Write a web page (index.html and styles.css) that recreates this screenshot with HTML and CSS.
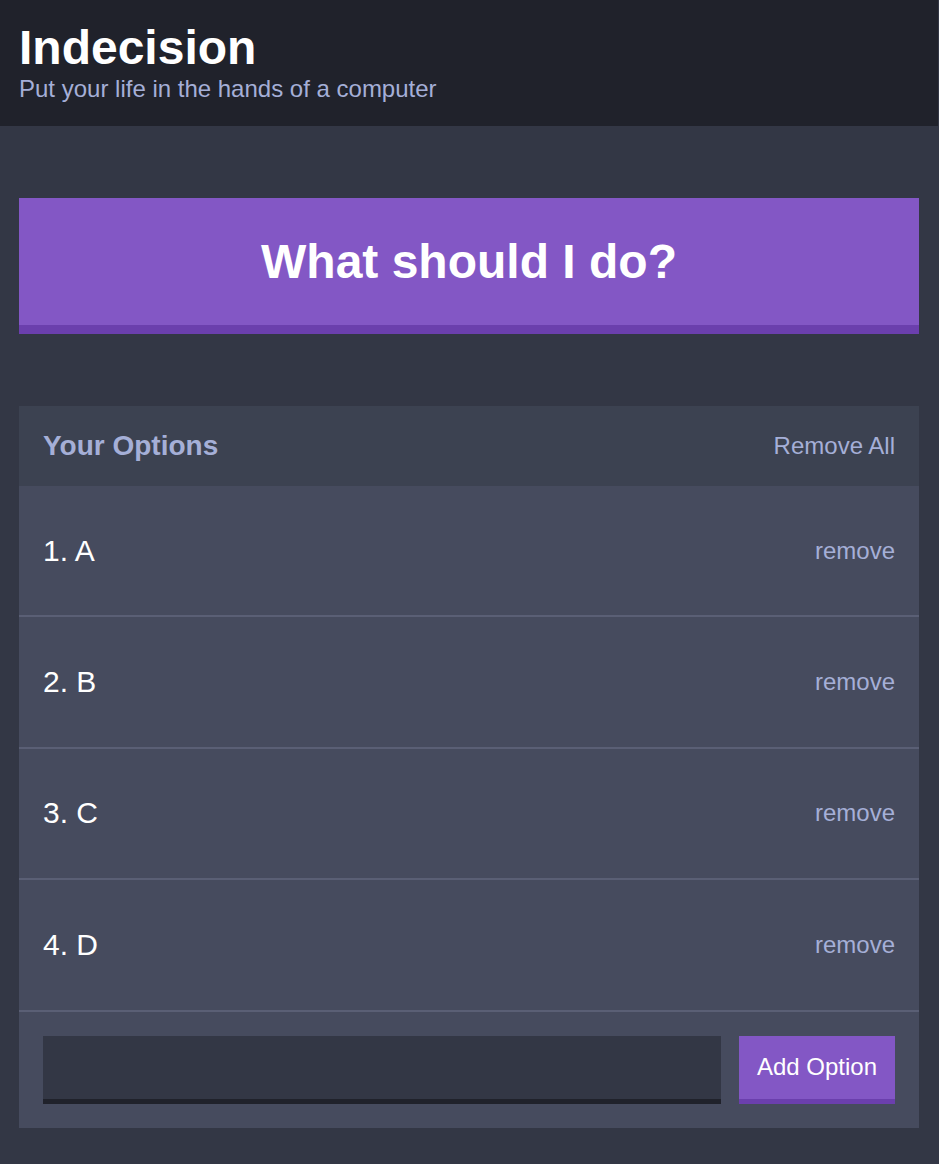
FILE: index.html
```html
<!DOCTYPE html>
<html lang="en">
<head>
<meta charset="utf-8">
<title>Indecision</title>
<link rel="stylesheet" href="styles.css">
</head>
<body>
<header class="header">
  <div class="container">
    <h1 class="header__title">Indecision</h1>
    <h2 class="header__subtitle">Put your life in the hands of a computer</h2>
  </div>
</header>
<main class="container">
  <button class="big-button">What should I do?</button>
  <section class="widget">
    <div class="widget-header">
      <h3 class="widget-header__title">Your Options</h3>
      <button class="button--link">Remove All</button>
    </div>
    <div class="option">
      <p class="option__text">1. A</p>
      <button class="button--link">remove</button>
    </div>
    <div class="option">
      <p class="option__text">2. B</p>
      <button class="button--link">remove</button>
    </div>
    <div class="option">
      <p class="option__text">3. C</p>
      <button class="button--link">remove</button>
    </div>
    <div class="option">
      <p class="option__text">4. D</p>
      <button class="button--link">remove</button>
    </div>
    <form class="add-option">
      <input class="add-option__input" type="text" name="option">
      <button class="button" type="button">Add Option</button>
    </form>
  </section>
</main>
</body>
</html>
```

FILE: styles.css
```css
* {
  box-sizing: border-box;
}

html, body {
  margin: 0;
  padding: 0;
}

body {
  background: #333745;
  font-family: "Liberation Sans", Arial, sans-serif;
  color: #ffffff;
  font-size: 24px;
  min-height: 1164px;
  padding-right: 1px;
}

.container {
  max-width: 900px;
  margin: 0 auto;
}

.header {
  background: #20222b;
  padding: 20px 0 24px;
  margin-bottom: 72px;
}

.header__title {
  margin: 0;
  font-size: 48px;
  font-weight: bold;
  line-height: 55px;
}

.header__subtitle {
  margin: 0;
  font-size: 24px;
  font-weight: normal;
  color: #a5afd7;
  line-height: 27px;
}

.big-button {
  display: block;
  width: 100%;
  background: #8357c5;
  color: #ffffff;
  border: none;
  border-bottom: 9px solid #6b3fad;
  font-family: inherit;
  font-size: 48px;
  font-weight: bold;
  line-height: 55px;
  padding: 36px 0;
  margin: 0 0 72px;
}

.widget {
  background: #464b5e;
}

.widget-header {
  background: #3c4251;
  display: flex;
  align-items: center;
  justify-content: space-between;
  height: 80px;
  padding: 0 24px;
}

.widget-header__title {
  margin: 0;
  font-size: 28px;
  font-weight: bold;
  color: #a5afd7;
}

.button--link {
  background: none;
  border: none;
  padding: 0;
  color: #a5afd7;
  font-family: inherit;
  font-size: 24px;
}

.option {
  display: flex;
  align-items: center;
  justify-content: space-between;
  height: 131.4px;
  padding: 0 24px;
  border-bottom: 2px solid #5a5f75;
}

.option__text {
  margin: 0;
  font-size: 30px;
  color: #ffffff;
}

.add-option {
  display: flex;
  gap: 18px;
  padding: 24px;
}

.add-option__input {
  flex: 1;
  height: 68px;
  background: #333745;
  border: none;
  border-bottom: 5px solid #20222b;
  color: #a5afd7;
  font-family: inherit;
  font-size: 24px;
  padding: 0 12px;
  outline: none;
}

.button {
  width: 156px;
  height: 68px;
  background: #8357c5;
  border: none;
  border-bottom: 5px solid #6b3fad;
  color: #ffffff;
  font-family: inherit;
  font-size: 24px;
  padding: 0;
}
```
